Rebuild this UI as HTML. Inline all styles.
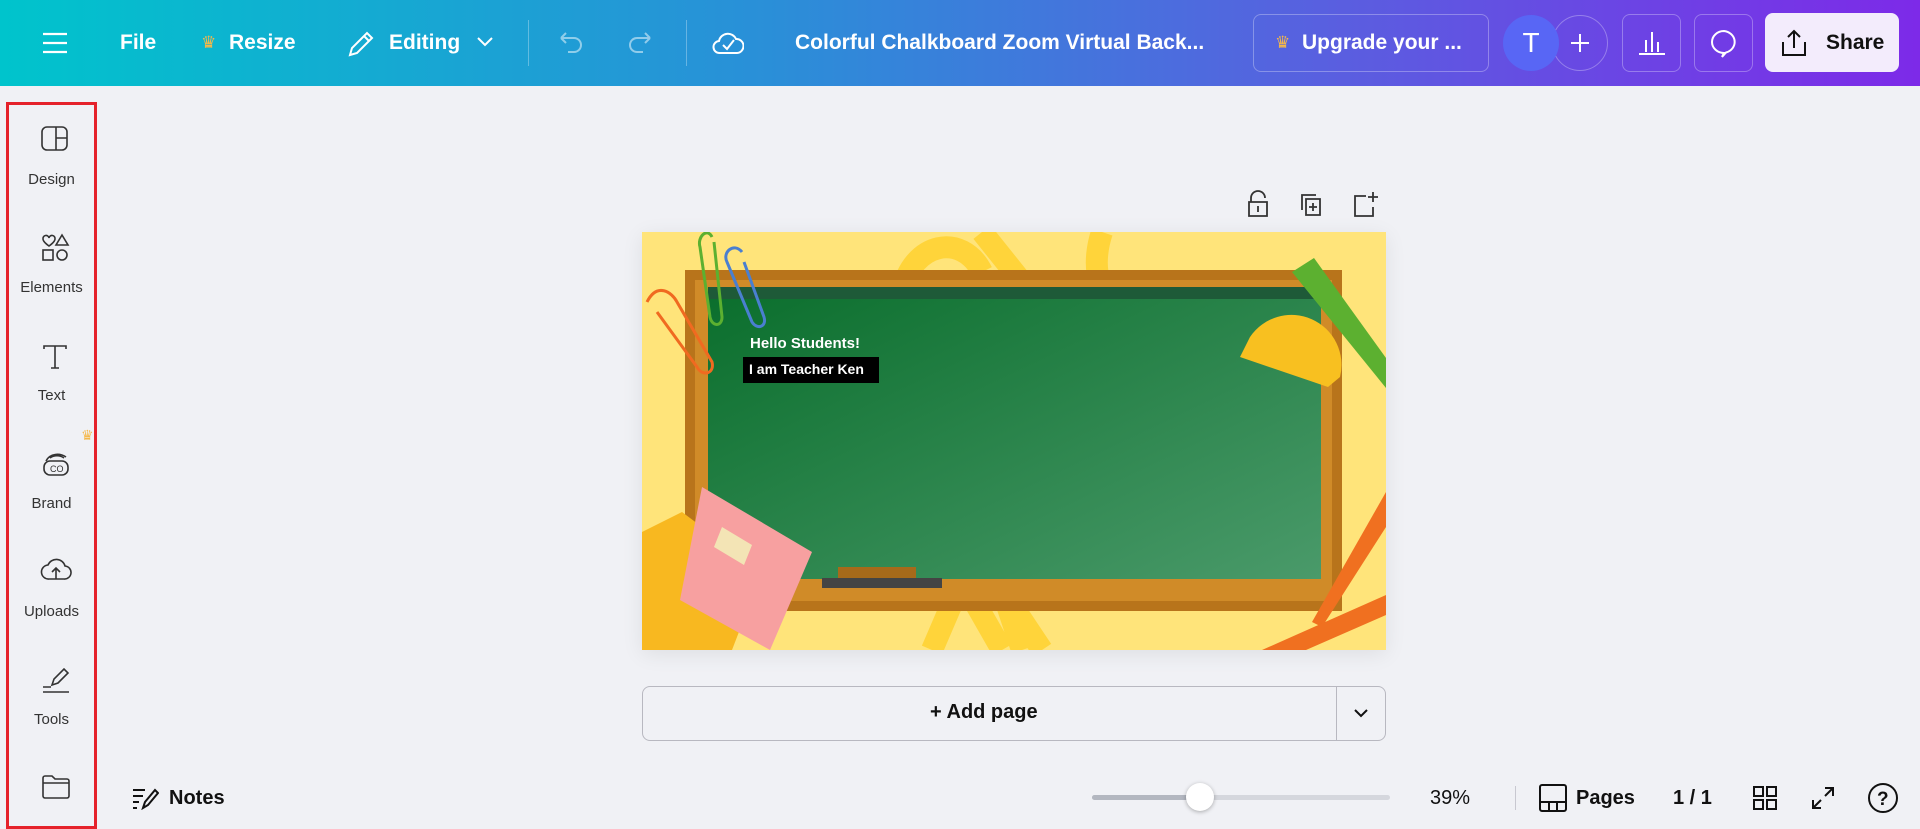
<!DOCTYPE html>
<html><head><meta charset="utf-8"><style>
*{margin:0;padding:0;box-sizing:border-box}
body{width:1920px;height:827px;overflow:hidden;background:#f0f1f5;font-family:"Liberation Sans",sans-serif;position:relative}
.top{position:absolute;left:0;top:0;width:1920px;height:86px;background:linear-gradient(90deg,#00c4cc 0%,#2a8fd8 40%,#5a5ee0 70%,#7d2ae8 100%)}
.a{position:absolute}
.tw{color:#fff;font-weight:bold;font-size:21px}
.sb{position:absolute;left:6px;top:102px;width:91px;height:727px;border:3px solid #e5222b}
.it{position:absolute;left:0;width:100%;text-align:center;font-size:15px;color:#333}
.ic{stroke:#333;fill:none;stroke-width:1.6}
</style></head><body>
<div class="top">
<svg class="a" style="left:42px;top:31px" width="26" height="24"><path d="M1 3h24M1 12h24M1 21h24" stroke="#fff" stroke-width="2.2"/></svg>
<div class="a tw" style="left:120px;top:31px">File</div>
<div class="a" style="left:201px;top:33px;color:#f5b84a;font-size:17px">♛</div>
<div class="a tw" style="left:229px;top:31px">Resize</div>
<svg class="a" style="left:346px;top:28px" width="30" height="30"><path d="M4 27l2-7L21 5l5 5-15 15zM18 8l5 5" stroke="#fff" stroke-width="2" fill="none"/></svg>
<div class="a tw" style="left:389px;top:31px">Editing</div>
<svg class="a" style="left:476px;top:36px" width="18" height="12"><path d="M2 2l7 7 7-7" stroke="#fff" stroke-width="2" fill="none"/></svg>
<div class="a" style="left:528px;top:20px;width:1px;height:46px;background:rgba(255,255,255,.3)"></div>
<svg class="a" style="left:557px;top:30px" width="28" height="26"><path d="M4 8h13a7 7 0 010 14h-6M4 8l5-5M4 8l5 5" stroke="rgba(255,255,255,.5)" stroke-width="2" fill="none"/></svg>
<svg class="a" style="left:626px;top:30px" width="28" height="26"><path d="M24 8H11a7 7 0 000 14h6M24 8l-5-5M24 8l-5 5" stroke="rgba(255,255,255,.5)" stroke-width="2" fill="none"/></svg>
<div class="a" style="left:686px;top:20px;width:1px;height:46px;background:rgba(255,255,255,.3)"></div>
<svg class="a" style="left:712px;top:27px" width="32" height="30"><path d="M8 26a6 6 0 01-1-12 9 9 0 0117-2 7 7 0 011 14z M11 18l4 4 7-9" stroke="#fff" stroke-width="2" fill="none"/></svg>
<div class="a tw" style="left:795px;top:31px">Colorful Chalkboard Zoom Virtual Back...</div>
<div class="a" style="left:1253px;top:14px;width:236px;height:58px;border:1px solid rgba(255,255,255,.3);border-radius:8px"></div>
<div class="a" style="left:1275px;top:33px;color:#f5b84a;font-size:17px">♛</div>
<div class="a tw" style="left:1302px;top:31px">Upgrade your ...</div>
<div class="a" style="left:1552px;top:15px;width:56px;height:56px;border:1px solid rgba(255,255,255,.3);border-radius:50%"></div>
<div class="a" style="left:1503px;top:15px;width:56px;height:56px;border-radius:50%;background:#5866f5;color:#fff;font-size:28px;text-align:center;line-height:56px">T</div>
<svg class="a" style="left:1570px;top:33px" width="20" height="20"><path d="M10 1v18M1 10h18" stroke="#fff" stroke-width="2"/></svg>
<div class="a" style="left:1622px;top:14px;width:59px;height:58px;border:1px solid rgba(255,255,255,.3);border-radius:8px"></div>
<svg class="a" style="left:1637px;top:28px" width="30" height="28"><path d="M2 26h26M9 24V12M15 24V4M21 24V14" stroke="#fff" stroke-width="2"/></svg>
<div class="a" style="left:1694px;top:14px;width:59px;height:58px;border:1px solid rgba(255,255,255,.3);border-radius:8px"></div>
<svg class="a" style="left:1709px;top:28px" width="30" height="32"><path d="M15 3a12 11 0 100 22l-2 4 4-4.5A12 11 0 0015 3z" stroke="#fff" stroke-width="2" fill="none"/></svg>
<div class="a" style="left:1765px;top:13px;width:134px;height:59px;background:#f3ecfc;border-radius:8px"></div>
<svg class="a" style="left:1780px;top:28px" width="28" height="30"><path d="M14 20V3M8 9l6-6 6 6M3 14v13h22V14" stroke="#111" stroke-width="2" fill="none"/></svg>
<div class="a" style="left:1826px;top:31px;font-size:21px;font-weight:bold;color:#111">Share</div>
</div>

<div class="sb">
<svg class="a" style="left:31px;top:20px" width="30" height="28"><rect x="2" y="2" width="25" height="23" rx="5" class="ic"/><path d="M16 2v23M16 13h11" class="ic"/></svg>
<div class="it" style="top:66px">Design</div>
<svg class="a" style="left:31px;top:128px" width="30" height="30"><path d="M3 6a3 3 0 016-1 3 3 0 016 1c0 3-6 7-6 7S3 9 3 6z" class="ic"/><path d="M22 2l6 10H16z" class="ic"/><rect x="3" y="17" width="10" height="10" class="ic"/><circle cx="22" cy="22" r="5" class="ic"/></svg>
<div class="it" style="top:174px">Elements</div>
<svg class="a" style="left:33px;top:238px" width="26" height="28"><path d="M2 6V3h22v3M13 3v22M9 25h8" class="ic"/></svg>
<div class="it" style="top:282px">Text</div>
<div class="a" style="left:72px;top:322px;color:#f5b84a;font-size:14px">♛</div>
<svg class="a" style="left:32px;top:344px" width="30" height="30"><rect x="3" y="12" width="24" height="14" rx="6" class="ic"/><path d="M5 12c4-8 14-8 20-4M9 9c4-3 10-3 14 0" class="ic"/><text x="9" y="23" font-size="9" font-family="Liberation Sans" fill="#333">CO</text></svg>
<div class="it" style="top:390px">Brand</div>
<svg class="a" style="left:31px;top:450px" width="32" height="28"><path d="M9 24a7 7 0 01-1-14 9 9 0 0117 1 6 6 0 01-1 13z M16 24V13M12 17l4-4 4 4" class="ic"/></svg>
<div class="it" style="top:498px">Uploads</div>
<svg class="a" style="left:31px;top:560px" width="32" height="30"><path d="M12 20l2-6 10-10 4 4-10 10zM3 22h8M3 27h26" class="ic"/></svg>
<div class="it" style="top:606px">Tools</div>
<svg class="a" style="left:32px;top:668px" width="30" height="28"><path d="M2 5a2 2 0 012-2h7l3 3h12a2 2 0 012 2v15a2 2 0 01-2 2H4a2 2 0 01-2-2zM2 10h26" class="ic"/></svg>
</div>

<svg class="a" style="left:1246px;top:190px" width="24" height="28"><path d="M5 12V8a7 7 0 0114 0M3 12h18v14H3zM12 16v6" stroke="#333" stroke-width="1.8" fill="none"/></svg>
<svg class="a" style="left:1298px;top:192px" width="26" height="26"><path d="M4 18V3h14M8 7h14v16H8zM15 11v8M11 15h8" stroke="#333" stroke-width="1.8" fill="none"/></svg>
<svg class="a" style="left:1352px;top:190px" width="28" height="28"><path d="M14 6H3v20h18v-9M21 2v10M16 7h10" stroke="#333" stroke-width="1.8" fill="none"/></svg>

<div class="a" style="left:642px;top:232px;width:744px;height:418px;background:#ffe47a;overflow:hidden;box-shadow:0 4px 20px rgba(0,0,0,.08)">
<svg width="744" height="418" style="position:absolute;left:0;top:0">
<path d="M260 60c10-50 60-60 80-20M340 0l40 50M460 0c-10 30-5 60 10 60" stroke="#ffd43a" stroke-width="22" fill="none"/>
<path d="M290 418l30-70 40 70M380 418l-20-60 40 60" stroke="#ffd43a" stroke-width="22" fill="none"/>
<rect x="43" y="38" width="657" height="341" fill="#b8741b"/>
<rect x="53" y="48" width="637" height="321" fill="#d08b28"/>
<defs><linearGradient id="g" x1="0" y1="0" x2="1" y2="1"><stop offset="0" stop-color="#0a6e2c"/><stop offset="1" stop-color="#4a9a6a"/></linearGradient></defs>
<rect x="66" y="55" width="613" height="292" fill="url(#g)"/>
<rect x="66" y="55" width="613" height="12" fill="#1e5a38"/>
<rect x="196" y="335" width="78" height="18" fill="#a66a1a"/>
<rect x="180" y="346" width="120" height="10" fill="#444"/>
<path d="M70 5c-5-10-15 0-12 10l10 70c2 10 12 10 12 0L72 10" stroke="#5cb030" stroke-width="3" fill="none"/>
<path d="M100 20c-8-10-20 0-15 10l25 60c5 8 15 5 12-5L102 30" stroke="#4a7fd0" stroke-width="3" fill="none"/>
<path d="M5 70c10-20 25-10 30 0l35 60c3 12-10 15-15 5L15 80" stroke="#f06a20" stroke-width="3" fill="none"/>
<path d="M40 280l80 60-30 78H0V300z" fill="#f8b820"/>
<path d="M60 255l110 65-42 98-90-50z" fill="#f7a0a0"/>
<path d="M80 295l30 18-8 20-30-18z" fill="#f3e4b5"/>
<path d="M650 40l22-14 72 100v30z" fill="#5cb030"/>
<path d="M608 105a50 50 0 0190 40l-12 10-88-30z" fill="#f8c020"/>
<path d="M744 260L670 390l10 5 64-100z" fill="#f07020"/>
<path d="M620 418l124-55v20l-80 35z" fill="#f07020"/>
</svg>
<div class="a" style="left:108px;top:103px;color:#fff;font-size:15px;font-weight:bold">Hello Students!</div>
<div class="a" style="left:101px;top:125px;width:136px;height:26px;background:#000;color:#fff;font-size:14px;font-weight:bold;padding:4px 0 0 6px">I am Teacher Ken</div>
</div>

<div class="a" style="left:642px;top:686px;width:744px;height:55px;border:1px solid #b8b8c0;border-radius:8px"></div>
<div class="a" style="left:1336px;top:687px;width:1px;height:53px;background:#b8b8c0"></div>
<div class="a" style="left:930px;top:701px;font-size:20px;font-weight:bold;color:#111">+ Add page</div>
<svg class="a" style="left:1353px;top:707px" width="16" height="12"><path d="M2 3l6 6 6-6" stroke="#111" stroke-width="2" fill="none"/></svg>

<svg class="a" style="left:131px;top:786px" width="28" height="24"><path d="M2 4h12M2 10h10M2 16h6M2 22h4M12 22l2-6 10-12 3 3-10 12z" stroke="#111" stroke-width="2" fill="none"/></svg>
<div class="a" style="left:169px;top:787px;font-size:20px;font-weight:bold;color:#111">Notes</div>
<div class="a" style="left:1092px;top:795px;width:298px;height:5px;background:#d5d7dd;border-radius:3px"></div>
<div class="a" style="left:1092px;top:795px;width:108px;height:5px;background:#b3b7c0;border-radius:3px"></div>
<div class="a" style="left:1186px;top:783px;width:28px;height:28px;border-radius:50%;background:#fff;box-shadow:0 1px 4px rgba(0,0,0,.3)"></div>
<div class="a" style="left:1430px;top:787px;font-size:20px;color:#111">39%</div>
<div class="a" style="left:1515px;top:786px;width:1px;height:24px;background:#c8c8d0"></div>
<svg class="a" style="left:1538px;top:783px" width="30" height="30"><rect x="2" y="2" width="26" height="26" rx="2" stroke="#111" stroke-width="2" fill="none"/><path d="M2 19h26M11 19v9M19 19v9" stroke="#111" stroke-width="2"/></svg>
<div class="a" style="left:1576px;top:787px;font-size:20px;font-weight:bold;color:#111">Pages</div>
<div class="a" style="left:1673px;top:787px;font-size:20px;font-weight:bold;color:#111">1 / 1</div>
<svg class="a" style="left:1752px;top:785px" width="26" height="26"><rect x="2" y="2" width="9" height="9" stroke="#111" stroke-width="2" fill="none"/><rect x="15" y="2" width="9" height="9" stroke="#111" stroke-width="2" fill="none"/><rect x="2" y="15" width="9" height="9" stroke="#111" stroke-width="2" fill="none"/><rect x="15" y="15" width="9" height="9" stroke="#111" stroke-width="2" fill="none"/></svg>
<svg class="a" style="left:1810px;top:785px" width="26" height="26"><path d="M15 3h8v8M23 3l-8 8M11 23H3v-8M3 23l8-8" stroke="#111" stroke-width="2" fill="none"/></svg>
<svg class="a" style="left:1867px;top:782px" width="32" height="32"><circle cx="16" cy="16" r="14" stroke="#111" stroke-width="2" fill="none"/><text x="10" y="23" font-size="19" font-weight="bold" font-family="Liberation Sans" fill="#111">?</text></svg>
</body></html>
